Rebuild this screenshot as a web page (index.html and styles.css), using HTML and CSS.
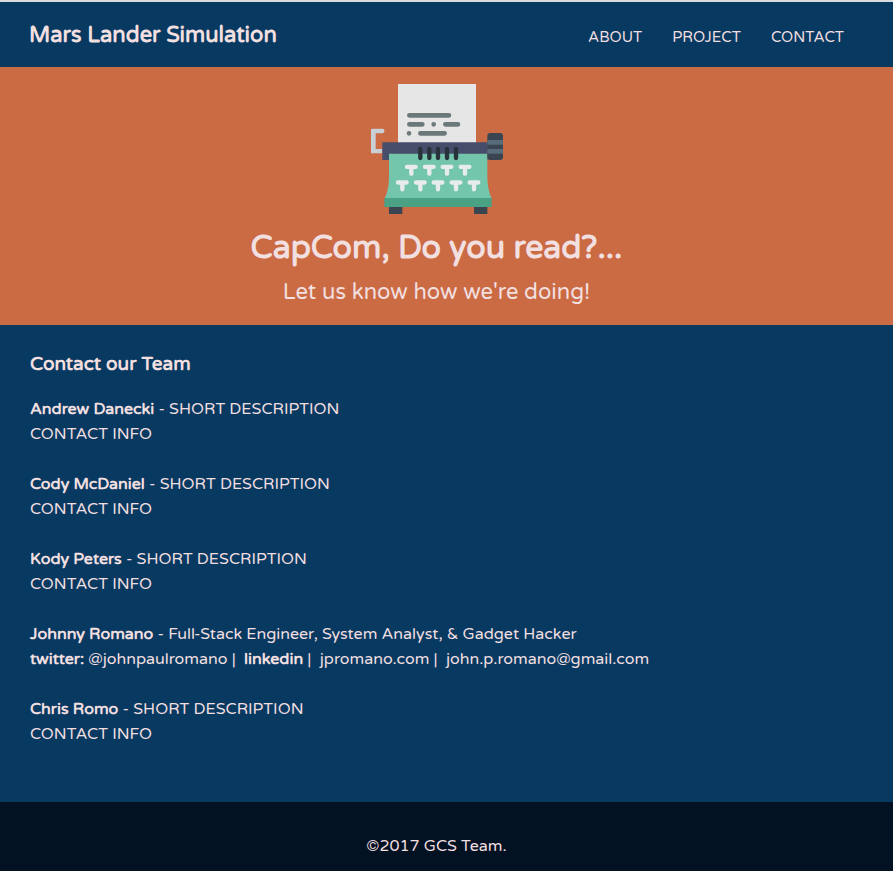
FILE: index.html
```html
<!DOCTYPE html>
<html lang="en">
<head>
<meta charset="utf-8">
<meta name="viewport" content="width=device-width, initial-scale=1">
<title>Mars Lander Simulation</title>
<link rel="stylesheet" href="styles.css">
</head>
<body>
<header class="site-header">
  <h1 class="brand">Mars Lander Simulation</h1>
  <nav class="nav">
    <a href="#about">ABOUT</a>
    <a href="#project">PROJECT</a>
    <a href="#contact">CONTACT</a>
  </nav>
</header>
<section class="hero">
  <svg class="typewriter" viewBox="33 27 396 390" aria-hidden="true">
    <path fill="#e6e6e6" d="M114 27H348V204H114z"/>
    <g stroke="#6c797a" stroke-width="14" stroke-linecap="round">
      <path d="M148 121H267M148 148H187M221 148H221.1M256 148H294M147 175H147.1M181 175H254"/>
    </g>
    <path fill="none" stroke="#c9d0d5" stroke-width="13" stroke-linecap="round" d="M67 168H40"/>
    <path fill="#c9d0d5" d="M33 162H47V222H67V235H33z"/>
    <path fill="#464d6b" d="M67 202H383V255H67z"/>
    <path fill="#73c5ab" d="M87 236H382V304Q382 344 395 370H74Q87 344 87 304z"/>
    <path fill="#4aa184" d="M73 369H395V396H73z"/>
    <path fill="#3a4551" d="M87 396H127V417H87zM342 396H382V417H342z"/>
    <rect x="382" y="174" width="47" height="81" rx="9" fill="#3a4551"/>
    <path fill="#576b7a" d="M382 195H429V209H382zM382 222H429V236H382z"/>
    <path stroke="#27323a" stroke-width="13" stroke-linecap="round" d="M181 222V249M208 222V249M234 222V249M261 222V249M288 222V249"/>
    <path fill="none" stroke="#e8ebec" stroke-width="13" stroke-linecap="round" stroke-linejoin="round" d="M141 275.500H167M154 276V296M195 275.500H221M208 276V296M248 275.500H274M261 276V296M302 275.500H328M315 276V296M114 322.500H140M127 323V343M168 322.500H194M181 323V343M221 322.500H247M234 323V343M275 322.500H301M288 323V343M329 322.500H355M342 323V343"/>
  </svg>
  <h2 class="hero-title">CapCom, Do you read?...</h2>
  <p class="hero-text">Let us know how we're doing!</p>
</section>
<main class="team">
  <h3 class="team-title">Contact our Team</h3>
  <p class="member"><b>Andrew Danecki</b> - SHORT DESCRIPTION<br>CONTACT INFO</p>
  <p class="member"><b>Cody McDaniel</b> - SHORT DESCRIPTION<br>CONTACT INFO</p>
  <p class="member"><b>Kody Peters</b> - SHORT DESCRIPTION<br>CONTACT INFO</p>
  <p class="member"><b>Johnny Romano</b> - Full-Stack Engineer, System Analyst, &amp; Gadget Hacker<br><b>twitter:</b> @johnpaulromano |&nbsp; <b>linkedin</b> |&nbsp; jpromano.com |&nbsp; john.p.romano@gmail.com</p>
  <p class="member"><b>Chris Romo</b> - SHORT DESCRIPTION<br>CONTACT INFO</p>
</main>
<footer class="site-footer">©2017 GCS Team.</footer>
</body>
</html>
```
FILE: styles.css
```css
* {
  box-sizing: border-box;
}

body {
  margin: 0;
  min-height: 100vh;
  display: flex;
  flex-direction: column;
  border-top: 2px solid #d8dadd;
  background: #031222;
  color: #f2dfe0;
  font: 16px/25px "Varela Round", "Noto Sans", sans-serif;
}

h1, h2, h3, p {
  margin: 0;
}

.site-header {
  display: flex;
  align-items: center;
  justify-content: space-between;
  padding: 17px 49px 15px 29px;
  background: #083a61;
}

.brand {
  font-size: 22px;
  line-height: 33px;
  font-weight: 700;
}

.nav {
  display: flex;
  gap: 30px;
  padding-top: 4px;
  font-size: 15px;
}

.nav a {
  color: inherit;
  text-decoration: none;
}

.hero {
  display: flex;
  flex-direction: column;
  align-items: center;
  padding: 17px 20px 15px 0;
  background: #cb6b43;
  text-align: center;
}

.typewriter {
  width: 132px;
  height: 130px;
}

.hero-title {
  margin-top: 9px;
  font-size: 32px;
  line-height: 50px;
  font-weight: 700;
}

.hero-text {
  margin-top: 2px;
  font-size: 22px;
  line-height: 35px;
}

.team {
  padding: 24px 49px 30px 30px;
  background: #083a61;
}

.team-title {
  margin-bottom: 18px;
  font-size: 19px;
  line-height: 30px;
  font-weight: 700;
}

.member {
  margin-bottom: 25px;
}

.member b {
  font-weight: 700;
}

.site-footer {
  padding: 32px 20px 12px 0;
  text-align: center;
}
```
